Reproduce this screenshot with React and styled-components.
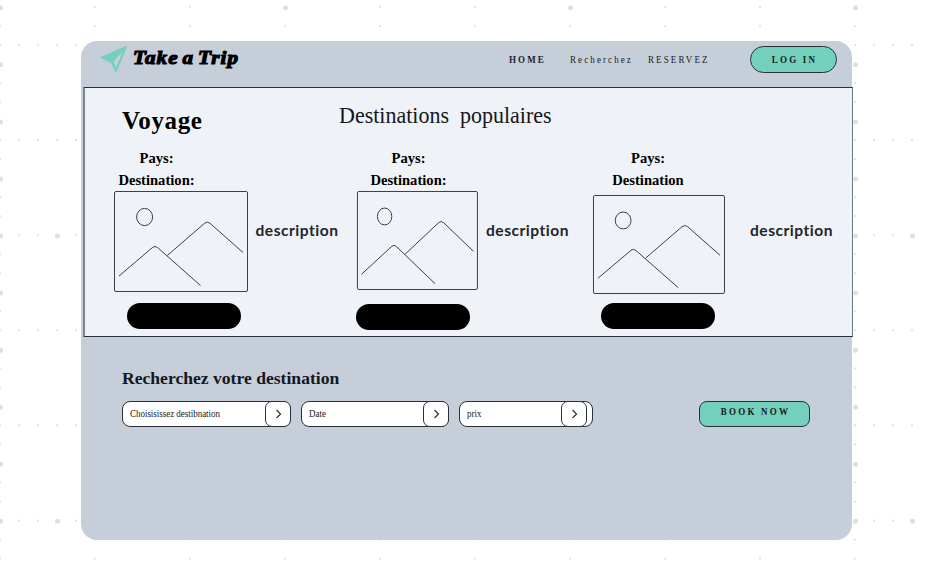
import React from "react";
import styled, { createGlobalStyle } from "styled-components";

const INK = "#2b2f3a";
const TEAL = "#73d0bc";
const SERIF = '"Liberation Serif", serif';

const GlobalStyle = createGlobalStyle`
  * { box-sizing: border-box; }
  body { margin: 0; background: #fff; font-family: ${SERIF}; overflow: hidden; }
  h1, h2, h3, p { margin: 0; }
  button { font-family: inherit; cursor: pointer; }
`;

const Page = styled.div`
  position: relative;
  width: 927px;
  height: 571px;
  padding: 41px 0 0 81px;
  overflow: hidden;
`;

const Dots = styled.svg`
  position: absolute;
  inset: 0;
  fill: #dfdfe1;
`;

const Board = styled.main`
  position: relative;
  width: 771px;
  height: 499px;
  border-radius: 16px;
  background: #c5ced9;
`;

const Header = styled.header`
  display: flex;
  align-items: flex-start;
  height: 46px;
  padding: 5px 15px 0 19px;
`;

const Plane = styled.svg`
  width: 28px;
  height: 28px;
`;

const Brand = styled.span`
  width: 107px;
  margin: 0 0 0 5px;
  font: italic 700 18px/24px ${SERIF};
  letter-spacing: 0.9px;
  word-spacing: -2px;
  color: #000;
  white-space: nowrap;
  -webkit-text-stroke: 1.1px #000;
  transform: scaleX(1.17);
  transform-origin: left;
`;

const Nav = styled.nav`
  display: flex;
  margin-left: auto;
  padding-top: 4px;
`;

const NavLink = styled.a`
  width: ${(p) => p.$width}px;
  font-size: 9px;
  line-height: 18px;
  font-weight: ${(p) => (p.$active ? 700 : 400)};
  letter-spacing: 2.1px;
  color: #1d2229;
  transform: scaleY(1.18);
`;

const ActionButton = styled.button`
  display: block;
  padding: 0 0 ${(p) => p.$lift || 0}px 2px;
  width: ${(p) => p.$width}px;
  height: ${(p) => p.$height}px;
  border: 1px solid ${INK};
  border-radius: ${(p) => p.$radius}px;
  background: ${TEAL};
  color: #12211f;
  font-size: 9px;
  font-weight: 700;
  letter-spacing: 2.2px;
  span { display: block; transform: scaleY(1.18); }
`;

const Panel = styled.section`
  width: 770px;
  height: 250px;
  margin-left: 2px;
  border: 1px solid ${INK};
  border-left: 2px solid #7d8590;
  border-right-color: #707783;
  background: #eff3f8;
`;

const Headings = styled.div`
  display: flex;
  height: 60px;
  padding-left: 37px;
`;

const Title = styled.h1`
  width: 217px;
  padding-top: 18px;
  font-size: 25px;
  line-height: 30px;
  letter-spacing: 0.6px;
`;

const Subtitle = styled.h2`
  height: 42px;
  padding-top: 13px;
  font-size: 22px;
  line-height: 28px;
  font-weight: 400;
  white-space: pre;
  color: #14161a;
  transform: scaleY(1.07);
`;

const Destinations = styled.div`
  display: flex;
  padding-left: 29px;
`;

const Destination = styled.article`
  display: flex;
  width: ${(p) => p.$width}px;
`;

const Visual = styled.div`
  flex: none;
  width: ${(p) => p.$width}px;
`;

const Labels = styled.div`
  width: 86px;
  height: 44px;
  margin: -1px 0 0 ${(p) => p.$left}px;
  font-size: 14.6px;
  line-height: 22px;
  font-weight: 700;
  text-align: center;
  white-space: nowrap;
`;

const Picture = styled.svg`
  display: block;
  width: 100%;
  height: ${(p) => p.$height}px;
  margin-top: ${(p) => p.$top}px;
  overflow: visible;
  fill: none;
  stroke: #3c3f48;
  * { vector-effect: non-scaling-stroke; }
`;

const Pill = styled.button`
  display: block;
  width: 114px;
  height: 26px;
  margin: ${(p) => p.$top}px 0 0 ${(p) => p.$left}px;
  border: 0;
  border-radius: 13px;
  background: #000;
`;

const Description = styled.p`
  margin: 71px 0 0 ${(p) => p.$gap}px;
  font: 700 15.6px/22px Lato, sans-serif;
  letter-spacing: 0.5px;
  color: #23252a;
`;

const Search = styled.section`
  padding: 30px 0 0 41px;
`;

const SearchTitle = styled.h3`
  height: 34px;
  font-size: 17.6px;
  line-height: 22px;
  color: #15181d;
`;

const SearchRow = styled.div`
  display: flex;
  gap: 10px;
`;

const Field = styled.div`
  display: flex;
  align-items: center;
  justify-content: space-between;
  width: ${(p) => p.$width}px;
  height: 26px;
  padding: 0 ${(p) => p.$end}px 0 7px;
  border: 1px solid ${INK};
  border-radius: 8px;
  background: #fff;
  color: #222;
`;

const FieldText = styled.span`
  font-size: 9px;
  letter-spacing: -0.03px;
  transform: scaleY(1.15);
`;

const Arrow = styled.button`
  display: grid;
  place-items: center;
  width: 26px;
  height: 26px;
  margin-right: -1px;
  padding: 0;
  border: 1px solid ${INK};
  border-radius: 7px;
  background: #fff;
`;

const BookSlot = styled.div`
  margin-left: auto;
  padding-right: 42px;
`;

const dots = [];
for (let i = 0; i < 49; i++) {
  for (let j = 0; j < 30; j++) {
    if (i % 5 === 0 || j % 5 === 2) {
      const big = i % 3 === 0 && j % 3 === 0;
      dots.push({ x: i * 19 + (big ? 0.5 : 0), y: j * 19.02 + (big ? 7.8 : 7), r: big ? 2.5 : 1.1 });
    }
  }
}

const destinations = [
  { label: "Destination:", width: 243, visual: 133, labels: -0.5, top: 0, height: 100, pillTop: 12, pillLeft: 13, gap: 8.5 },
  { label: "Destination:", width: 236, visual: 120, labels: 8.5, top: 0, height: 98, pillTop: 15, pillLeft: -1, gap: 9 },
  { label: "Destination", width: 240, visual: 131, labels: 12, top: 4, height: 98, pillTop: 10, pillLeft: 8, gap: 26 },
];

const fields = [
  { text: "Choisisissez destibnation", width: 169, end: 0 },
  { text: "Date", width: 148, end: 0 },
  { text: "prix", width: 134, end: 6 },
];

function Landscape({ height, top }) {
  return (
    <Picture viewBox="0 0 133 100" preserveAspectRatio="none" $height={height} $top={top}>
      <rect x="0.5" y="0.5" width="133" height="100" rx="1.5" />
      <ellipse cx="30.6" cy="26" rx="8" ry="8.6" />
      <path d="M5 85 L38.5 56.5 Q41 54.4 43.5 56.5 L86.5 94.5" />
      <path d="M53.3 64.5 L90.5 32.3 Q93.2 30 96 32.3 L129 61.5" />
    </Picture>
  );
}

export default function App() {
  return (
    <>
      <GlobalStyle />
      <Page>
        <Dots width="927" height="571">
          {dots.map((d) => <circle key={`${d.x}-${d.y}`} cx={d.x} cy={d.y} r={d.r} />)}
        </Dots>
        <Board>
          <Header>
            <Plane viewBox="0 0 28 28">
              <path d="M1.6 11.5 L25.8 1.2 L16 25 L11.2 16 Z" fill={TEAL} stroke={TEAL} strokeWidth="1.8" strokeLinejoin="round" />
              <path d="M13.6 15.4 L23 5 L16 21.5 Z" fill="#c5ced9" />
            </Plane>
            <Brand>Take a Trip</Brand>
            <Nav>
              <NavLink $active $width={61}>HOME</NavLink>
              <NavLink $width={78}>Recherchez</NavLink>
              <NavLink $width={102}>RESERVEZ</NavLink>
            </Nav>
            <ActionButton $width={87} $height={27} $radius={14} $lift={2}><span>LOG IN</span></ActionButton>
          </Header>
          <Panel>
            <Headings>
              <Title>Voyage</Title>
              <Subtitle>{"Destinations  populaires"}</Subtitle>
            </Headings>
            <Destinations>
              {destinations.map((d, i) => (
                <Destination key={i} $width={d.width}>
                  <Visual $width={d.visual}>
                    <Labels $left={d.labels}>
                      <p>Pays:</p>
                      <p>{d.label}</p>
                    </Labels>
                    <Landscape height={d.height} top={d.top} />
                    <Pill $top={d.pillTop} $left={d.pillLeft} />
                  </Visual>
                  <Description $gap={d.gap}>description</Description>
                </Destination>
              ))}
            </Destinations>
          </Panel>
          <Search>
            <SearchTitle>Recherchez votre destination</SearchTitle>
            <SearchRow>
              {fields.map((f) => (
                <Field key={f.text} $width={f.width} $end={f.end}>
                  <FieldText>{f.text}</FieldText>
                  <Arrow>
                    <svg width="7" height="10" viewBox="0 0 7 10" fill="none" stroke="#333" strokeWidth="1.2">
                      <path d="M1.5 1 L5.5 5 L1.5 9" />
                    </svg>
                  </Arrow>
                </Field>
              ))}
              <BookSlot>
                <ActionButton $width={111} $height={26} $radius={8} $lift={7}><span>BOOK NOW</span></ActionButton>
              </BookSlot>
            </SearchRow>
          </Search>
        </Board>
      </Page>
    </>
  );
}
